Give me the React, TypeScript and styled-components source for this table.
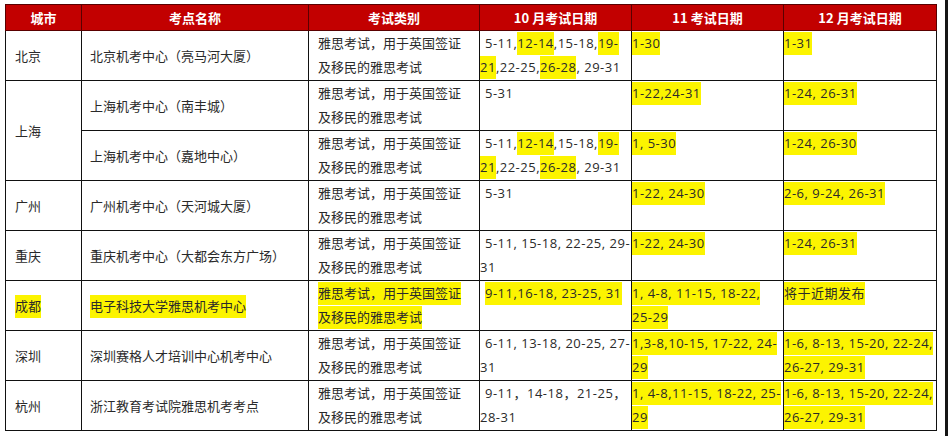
import React from 'react';
import styled, { createGlobalStyle } from 'styled-components';

const GlobalStyle = createGlobalStyle`
  html, body {
    margin: 0;
    padding: 0;
    background: #ffffff;
  }
  body {
    font-family: "Open Sans", "Noto Sans CJK SC", sans-serif;
    color: #222;
  }
`;

const Page = styled.div`
  display: flex;
  width: 948px;
  height: 436px;
  overflow: hidden;
`;

const Sheet = styled.div`
  flex: 1;
  padding: 4px 0 0 5px;
`;

const EdgeBar = styled.div`
  width: 3px;
  background: #151515;
`;

const Table = styled.table`
  width: 931px;
  border-collapse: collapse;
  table-layout: fixed;
`;

const HeadCell = styled.th`
  height: 25px;
  padding: 0;
  background: #c20000;
  color: #ffffff;
  font-family: "Noto Sans CJK SC", sans-serif;
  font-size: 13px;
  font-weight: 700;
  text-align: center;
  border: 1px solid #5a0000;
  white-space: nowrap;
`;

const Cell = styled.td<{ $pad?: number; $indent?: number; $middle?: boolean; $digits?: boolean }>`
  height: 49px;
  padding: 0 0 0 ${p => p.$pad ?? 0}px;
  text-indent: ${p => p.$indent ?? 0}px;
  vertical-align: ${p => (p.$middle ? 'middle' : 'top')};
  border: 1px solid #111;
  font-size: 13px;
  line-height: 24px;
  letter-spacing: ${p => (p.$digits ? '0.5px' : '0')};
  white-space: nowrap;
  color: #2a2a2a;
`;

const Mark = styled.span`
  background: #fcf400;
  padding: 2px 0 3px;
  -webkit-box-decoration-break: clone;
  box-decoration-break: clone;
`;

type Row = {
  city?: string;
  cityHl?: boolean;
  span?: number;
  site: string;
  siteHl?: boolean;
  kindHl?: boolean;
  oct: string;
  nov: string;
  dec: string;
};

// [..] marks a yellow highlight, | is a line break
const rows: Row[] = [
  {
    city: '北京',
    site: '北京机考中心（亮马河大厦）',
    oct: '5-11,[12-14],15-18,[19-|21],22-25,[26-28], 29-31',
    nov: '[1-30]',
    dec: '[1-31]',
  },
  {
    city: '上海',
    span: 2,
    site: '上海机考中心（南丰城）',
    oct: '5-31',
    nov: '[1-22,24-31]',
    dec: '[1-24, 26-31]',
  },
  {
    site: '上海机考中心（嘉地中心）',
    oct: '5-11,[12-14],15-18,[19-|21],22-25,[26-28], 29-31',
    nov: '[1, 5-30]',
    dec: '[1-24, 26-30]',
  },
  {
    city: '广州',
    site: '广州机考中心（天河城大厦）',
    oct: '5-31',
    nov: '[1-22, 24-30]',
    dec: '[2-6, 9-24, 26-31]',
  },
  {
    city: '重庆',
    site: '重庆机考中心（大都会东方广场）',
    oct: '5-11, 15-18, 22-25, 29-|31',
    nov: '[1-22, 24-30]',
    dec: '[1-24, 26-31]',
  },
  {
    city: '成都',
    cityHl: true,
    site: '电子科技大学雅思机考中心',
    siteHl: true,
    kindHl: true,
    oct: '[9-11,16-18, 23-25, 31]',
    nov: '[1, 4-8, 11-15, 18-22,|25-29]',
    dec: '[将于近期发布]',
  },
  {
    city: '深圳',
    site: '深圳赛格人才培训中心机考中心',
    oct: '6-11, 13-18, 20-25, 27-|31',
    nov: '[1,3-8,10-15, 17-22, 24-|29]',
    dec: '[1-6, 8-13, 15-20, 22-24,|26-27, 29-31]',
  },
  {
    city: '杭州',
    site: '浙江教育考试院雅思机考考点',
    oct: '9-11，14-18，21-25，|28-31',
    nov: '[1, 4-8,11-15, 18-22, 25-|29]',
    dec: '[1-6, 8-13, 15-20, 22-24,|26-27, 29-31]',
  },
];

const withBreaks = (text: string, key: string) =>
  text.split('|').map((line, i) => (
    <React.Fragment key={`${key}-${i}`}>
      {i > 0 && <br />}
      {line}
    </React.Fragment>
  ));

const renderDates = (value: string) =>
  value.split(/(\[[^\]]*\])/).filter(Boolean).map((part, i) =>
    part.startsWith('[') ? (
      <Mark key={i}>{withBreaks(part.slice(1, -1), `m${i}`)}</Mark>
    ) : (
      <React.Fragment key={i}>{withBreaks(part, `t${i}`)}</React.Fragment>
    )
  );

const maybeMark = (text: React.ReactNode, hl?: boolean) => (hl ? <Mark>{text}</Mark> : text);

const columns = [76, 227, 171, 152, 152, 153];

export default function App() {
  return (
    <>
      <GlobalStyle />
      <Page>
        <Sheet>
          <Table>
            <colgroup>
              {columns.map((w, i) => (
                <col key={i} style={{ width: w }} />
              ))}
            </colgroup>
            <thead>
              <tr>
                <HeadCell>城市</HeadCell>
                <HeadCell>考点名称</HeadCell>
                <HeadCell>考试类别</HeadCell>
                <HeadCell>10 月考试日期</HeadCell>
                <HeadCell>11 考试日期</HeadCell>
                <HeadCell>12 月考试日期</HeadCell>
              </tr>
            </thead>
            <tbody>
              {rows.map((r, i) => (
                <tr key={i}>
                  {r.city && (
                    <Cell $pad={9} $middle rowSpan={r.span ?? 1}>
                      {maybeMark(r.city, r.cityHl)}
                    </Cell>
                  )}
                  <Cell $pad={8} $middle>
                    {maybeMark(r.site, r.siteHl)}
                  </Cell>
                  <Cell $pad={9}>
                    {maybeMark(
                      <>
                        雅思考试，用于英国签证
                        <br />
                        及移民的雅思考试
                      </>,
                      r.kindHl
                    )}
                  </Cell>
                  <Cell $indent={5} $digits>
                    {renderDates(r.oct)}
                  </Cell>
                  <Cell $digits>{renderDates(r.nov)}</Cell>
                  <Cell $digits>{renderDates(r.dec)}</Cell>
                </tr>
              ))}
            </tbody>
          </Table>
        </Sheet>
        <EdgeBar />
      </Page>
    </>
  );
}
